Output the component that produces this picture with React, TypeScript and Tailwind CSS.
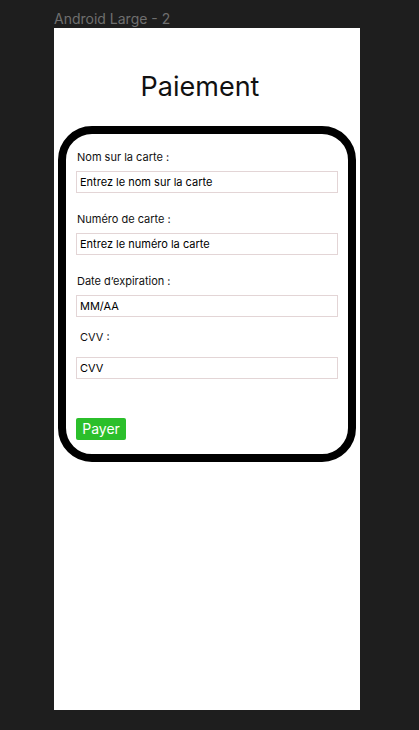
const FIELDS = [
  { label: "Nom sur la carte :", placeholder: "Entrez le nom sur la carte", gap: "mt-[16px]" },
  { label: "Numéro de carte :", placeholder: "Entrez le numéro la carte", gap: "mt-[19px]" },
  { label: "Date d’expiration :", placeholder: "MM/AA", gap: "mt-[19px]" },
  { label: "CVV :", placeholder: "CVV", gap: "mt-[13px]", indent: true },
];

export default function App() {
  return (
    <div
      className="min-h-screen bg-[#1e1e1e] pl-[54px] pb-[20px]"
      style={{ fontFamily: "Inter, 'Noto Sans', sans-serif" }}
    >
      <div className="h-[28px] flex items-center text-[14px] text-[#6f6f6f] pt-[8px]">
        Android Large - 2
      </div>
      <div className="w-[306px] h-[682px] bg-white flex flex-col">
        <h1 className="mt-[42px] pr-[14px] text-center text-[27px] leading-[34px] text-[#111]">Paiement</h1>
        <div className="ml-[4px] mt-[22px] w-[298px] h-[336px] rounded-[34px] border-[8px] border-black flex flex-col px-[10px]">
          {FIELDS.map((f) => (
            <div key={f.label} className={`flex flex-col ${f.gap}`}>
              <label className={`text-[11px] leading-[14px] text-[#111] ${f.indent ? "pl-[4px]" : "pl-[1px]"}`}>
                {f.label}
              </label>
              <input
                placeholder={f.placeholder}
                className={`${f.indent ? "mt-[13px]" : "mt-[7px]"} h-[22px] w-full border border-[#e3d5d6] px-[3px] text-[11px] text-black placeholder:text-black outline-none`}
              />
            </div>
          ))}
          <button className="mt-[39px] self-start w-[50px] h-[22px] rounded-[2px] bg-[#2bbf2b] text-white text-[14px] leading-[22px]">
            Payer
          </button>
        </div>
      </div>
    </div>
  );
}
